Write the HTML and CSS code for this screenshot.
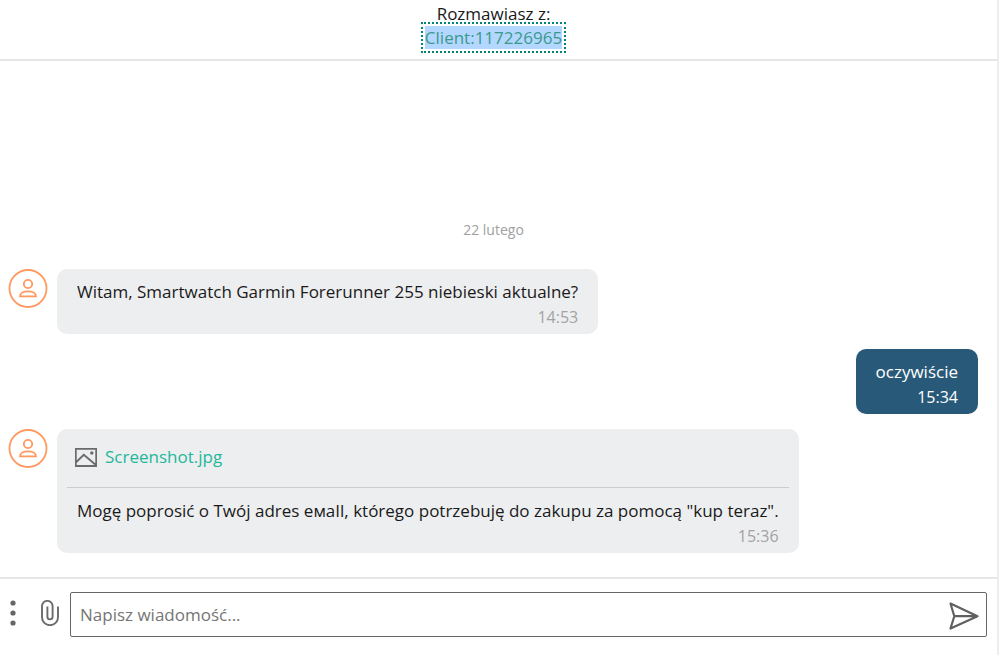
FILE: index.html
```html
<!DOCTYPE html>
<html lang="pl">

<head>
    <meta charset="UTF-8">
    <meta name="viewport" content="width=device-width, initial-scale=1.0">
    <title>Rozmowa</title>
    <link rel="stylesheet" href="styles.css">
</head>

<body>
    <div class="chat">
        <!-- Header -->
        <header class="chat-header">
            <div>Rozmawiasz z:</div>
            <a class="client" href="#"><span>Client:117226965</span></a>
        </header>

        <!-- Messages -->
        <main class="messages">
            <div class="date">22 lutego</div>

            <div class="message">
                <svg class="avatar" viewBox="0 0 40 40">
                    <circle cx="20" cy="19.5" r="18.5" />
                    <circle cx="20" cy="15" r="4.2" />
                    <path d="M12 27.3c0-3.3 3.8-5 8-5s8 1.7 8 5z" />
                </svg>
                <div class="bubble">
                    <div class="text">Witam, Smartwatch Garmin Forerunner 255 niebieski aktualne?</div>
                    <div class="time">14:53</div>
                </div>
            </div>

            <div class="message sent">
                <div class="bubble">
                    <div class="text">oczywiście</div>
                    <div class="time">15:34</div>
                </div>
            </div>

            <div class="message">
                <svg class="avatar" viewBox="0 0 40 40">
                    <circle cx="20" cy="19.5" r="18.5" />
                    <circle cx="20" cy="15" r="4.2" />
                    <path d="M12 27.3c0-3.3 3.8-5 8-5s8 1.7 8 5z" />
                </svg>
                <div class="bubble">
                    <a class="attachment" href="#">
                        <svg class="image-icon" viewBox="0 0 22 19">
                            <path d="M.8.8h20.4v17.2H.8zM.8 14.5l8-7.7 12.4 10.5" />
                            <circle cx="16.8" cy="5" r=".8" />
                        </svg>
                        Screenshot.jpg
                    </a>
                    <div class="text">Mogę poprosić o Twój adres емаIl, którego potrzebuję do zakupu za pomocą "kup teraz".</div>
                    <div class="time">15:36</div>
                </div>
            </div>
        </main>

        <!-- Message form -->
        <form class="composer">
            <button class="icon-button" type="button" aria-label="Więcej">
                <svg class="dots" viewBox="0 0 6 26">
                    <circle cx="3" cy="3" r="2.6" />
                    <circle cx="3" cy="13" r="2.6" />
                    <circle cx="3" cy="23" r="2.6" />
                </svg>
            </button>
            <button class="icon-button" type="button" aria-label="Dodaj załącznik">
                <svg class="clip" viewBox="0 0 18 26">
                    <path d="M17 6.5v10.7a8 8 0 0 1-16 0V6.2a5.2 5.2 0 0 1 10.6 0v10.6a2.6 2.6 0 0 1-5.2 0V6.5" />
                </svg>
            </button>
            <div class="field">
                <input type="text" aria-label="Wiadomość" placeholder="Napisz wiadomość...">
                <button class="icon-button" type="submit" aria-label="Wyślij">
                    <svg class="send" viewBox="0 0 30 28">
                        <path d="M1.5 1.5l27 12.7-27 12.3 3.8-12.3zM5.3 14.2h23.2" />
                    </svg>
                </button>
            </div>
        </form>
    </div>
</body>

</html>
```
FILE: styles.css
```css
* {
    box-sizing: border-box;
}

body {
    margin: 0;
    font-family: "Open Sans", "Noto Sans", sans-serif;
    font-size: 17px;
    line-height: 25px;
    color: #1a1a1a;
    background: #fff;
}

.chat {
    display: flex;
    flex-direction: column;
    min-height: 100vh;
    border-right: 2px solid #ededed;
}

/* Header */
.chat-header {
    display: flex;
    flex-direction: column;
    align-items: center;
    padding: 5px 10px 6px 0;
    border-bottom: 2px solid #e6e6e6;
    line-height: 17px;
}

.client {
    padding: 2px;
    border: 2px dotted #008573;
    color: #3a9a8c;
    text-decoration: none;
}

.client span {
    display: block;
    line-height: 23px;
    background: #b3d7ff;
}

/* Messages */
.messages {
    flex: 1;
    display: flex;
    flex-direction: column;
    justify-content: flex-end;
    gap: 15px;
    padding: 0 10px 24px 8px;
}

.date {
    margin-bottom: 12px;
    padding-right: 8px;
    font-size: 14px;
    text-align: center;
    color: #a0a0a0;
}

.message {
    display: flex;
    align-items: flex-start;
    gap: 9px;
}

.sent {
    justify-content: flex-end;
    padding-right: 9px;
}

.avatar {
    flex: none;
    width: 40px;
    height: 40px;
    fill: none;
    stroke: #ff9960;
    stroke-width: 1.8;
}

.bubble {
    padding: 10px 20px 4px;
    border-radius: 10px;
    background: #edeef0;
}

.time {
    font-size: 16px;
    line-height: 26px;
    text-align: right;
    color: #a3a3a3;
}

.sent .bubble {
    background: #285978;
    color: #fff;
}

.sent .time {
    color: #fff;
}

.attachment {
    display: flex;
    align-items: center;
    gap: 8px;
    margin: -10px -10px 10px;
    padding: 15px 8px 18px;
    border-bottom: 1px solid #cbccce;
    color: #23b89a;
    text-decoration: none;
}

.image-icon {
    width: 22px;
    height: 19px;
    margin-top: 2px;
    fill: none;
    stroke: #6b6b6b;
    stroke-width: 1.8;
}

/* Message form */
.composer {
    display: flex;
    align-items: center;
    padding: 13px 10px 18px;
    border-top: 2px solid #e6e6e6;
}

.icon-button {
    display: flex;
    padding: 0;
    border: none;
    background: none;
    cursor: pointer;
}

.composer > .icon-button {
    padding-bottom: 4px;
}

.dots {
    width: 6px;
    height: 26px;
    margin-right: 25px;
    fill: #666;
}

.clip {
    width: 18px;
    height: 26px;
    margin-right: 11px;
    fill: none;
    stroke: #6b6b6b;
    stroke-width: 1.9;
}

.field {
    flex: 1;
    display: flex;
    align-items: center;
    height: 45px;
    padding: 0 7px 0 9px;
    border: 1px solid #666;
    border-radius: 2px;
}

.field input {
    flex: 1;
    min-width: 0;
    padding: 0;
    border: none;
    outline: none;
    background: none;
    font: inherit;
    color: inherit;
}

.field input::placeholder {
    color: #757575;
    opacity: 1;
}

.send {
    width: 30px;
    height: 28px;
    margin-top: 2px;
    fill: none;
    stroke: #606060;
    stroke-width: 2.2;
    stroke-linejoin: round;
}
```
